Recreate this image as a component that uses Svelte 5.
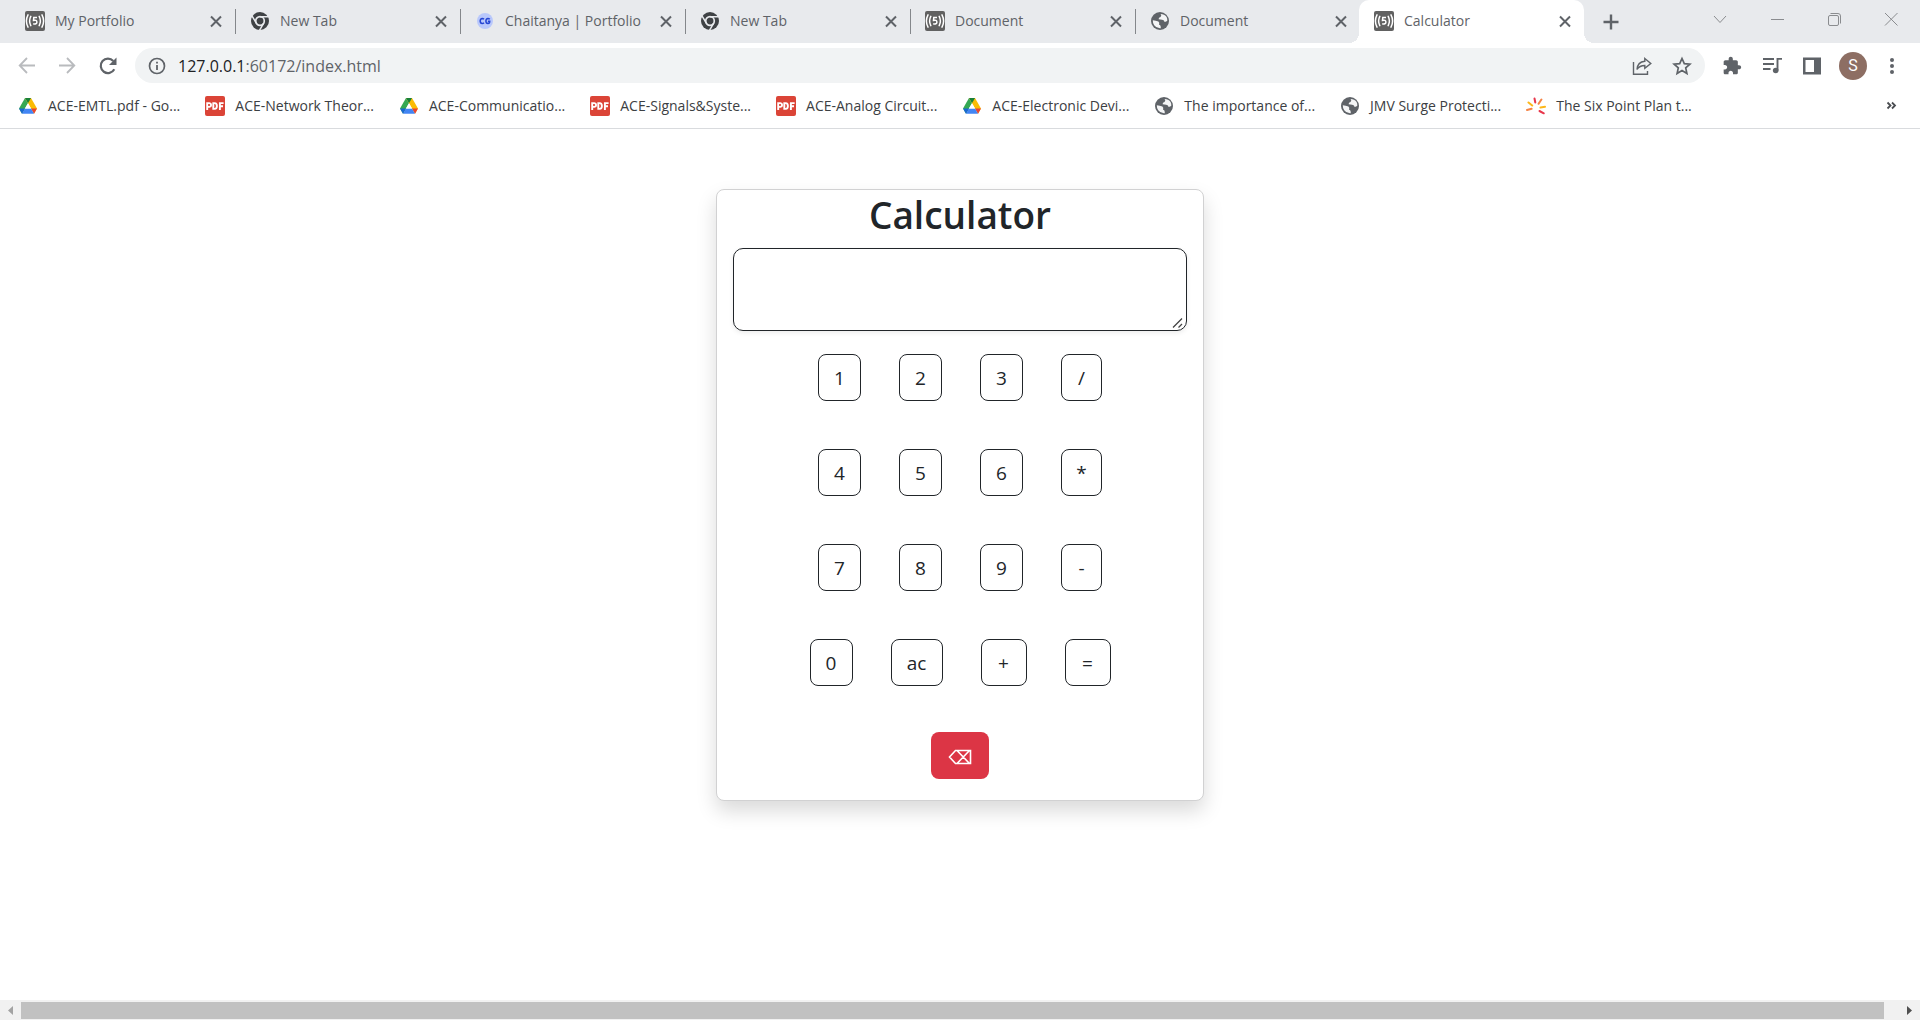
<script>
  const tabs = [
    { title: 'My Portfolio', icon: 'five' },
    { title: 'New Tab', icon: 'chrome' },
    { title: 'Chaitanya | Portfolio', icon: 'cg' },
    { title: 'New Tab', icon: 'chrome' },
    { title: 'Document', icon: 'five' },
    { title: 'Document', icon: 'globe' },
    { title: 'Calculator', icon: 'five', active: true },
  ];

  const bookmarks = [
    { title: 'ACE-EMTL.pdf - Go...', icon: 'drive' },
    { title: 'ACE-Network Theor...', icon: 'pdf' },
    { title: 'ACE-Communicatio...', icon: 'drive' },
    { title: 'ACE-Signals&Syste...', icon: 'pdf' },
    { title: 'ACE-Analog Circuit...', icon: 'pdf' },
    { title: 'ACE-Electronic Devi...', icon: 'drive' },
    { title: 'The importance of...', icon: 'globe' },
    { title: 'JMV Surge Protecti...', icon: 'globe' },
    { title: 'The Six Point Plan t...', icon: 'spark' },
  ];

  const rows = [
    ['1', '2', '3', '/'],
    ['4', '5', '6', '*'],
    ['7', '8', '9', '-'],
    ['0', 'ac', '+', '='],
  ];

  let expression = $state('');

  function sizeOf(key) {
    if (key === 'ac') return 'clear';
    if (key === '+' || key === '=') return 'wide';
    if ('/*-'.includes(key)) return 'slim';
    return 'digit';
  }

  function calculate(text) {
    const tokens = text.match(/\d+|[-+*/]/g) ?? [];
    const values = [Number(tokens[0] ?? 0)];
    for (let i = 1; i + 1 < tokens.length; i += 2) {
      const next = Number(tokens[i + 1]);
      if (tokens[i] === '*') values.push(values.pop() * next);
      else if (tokens[i] === '/') values.push(values.pop() / next);
      else values.push(tokens[i] === '-' ? -next : next);
    }
    return String(values.reduce((a, b) => a + b, 0));
  }

  function press(key) {
    if (key === 'ac') expression = '';
    else if (key === '=') expression = calculate(expression);
    else expression += key;
  }
</script>

{#snippet icon(name)}
  <svg class="icon" viewBox="0 0 20 20" aria-hidden="true">
    {#if name === 'five'}
      <rect width="20" height="20" rx="2" fill="#616161" />
      <g fill="none" stroke="#fff" stroke-width="1.5" stroke-linecap="round">
        <path d="M3 3.8Q-.2 10 3 16.2M17 3.8Q20.2 10 17 16.2M5.8 5.4Q3.4 10 5.8 14.6M14.2 5.4Q16.600 10 14.2 14.6" />
        <path d="M12 6.500H8.800L8.500 9.400Q11.900 8.600 11.900 11.200Q11.700 13.600 8.200 12.800" stroke-linecap="butt" />
      </g>
    {:else if name === 'chrome'}
      <circle cx="10" cy="10" r="9" fill="#3f4245" />
      <circle cx="10" cy="10" r="4.300" fill="none" stroke="#e8eaed" stroke-width="1.700" />
      <path d="M10 5.700H18.500M6.300 12.200L2 4.900M13.700 12.200L9.500 19.300" stroke="#e8eaed" stroke-width="1.500" />
    {:else if name === 'cg'}
      <circle cx="10" cy="10" r="8" fill="#b9c8fb" />
      <g fill="none" stroke="#2545d3" stroke-width="1.500">
        <path d="M9 8.200Q8.300 7.400 7.300 7.400Q5.200 7.600 5.200 10T7.300 12.600Q8.300 12.600 9 11.800" />
        <path d="M14.800 8.200Q14 7.400 13 7.400Q10.900 7.600 10.900 10T13 12.600Q14.800 12.500 14.700 10.300H12.900" />
      </g>
    {:else if name === 'globe'}
      <circle cx="10" cy="10" r="9" fill="#5f6368" />
      <path d="M10.600 3Q12 4.400 10.500 6Q8.500 6.200 8.600 8.200L12.200 8.800Q14.500 9 14.600 11Q16.400 10.800 17.300 9.800Q17.600 5.500 14 3.800Q12.500 3 10.600 3ZM2.800 9.200Q5.800 9.600 8.400 10.600Q10 12.200 8.900 13.600Q10.900 14 10.800 17.200Q6.500 17.600 4.200 14.300Q2.700 12 2.800 9.200Z" fill="#f4f5f6" />
    {:else if name === 'drive'}
      <path d="M7 2L10 7.200L4 17.700L1 12.500Z" fill="#34a853" />
      <path d="M13 2L7 2L16 17.700L19 12.500Z" fill="#fbbc04" />
      <path d="M7 2H13L10 7.200Z" fill="#188038" />
      <path d="M13 12.500H19L16 17.700Z" fill="#ea4335" />
      <path d="M4 17.700L7 12.500H13L16 17.700Z" fill="#4285f4" />
      <path d="M1 12.500H7L4 17.700Z" fill="#1967d2" />
      <path d="M10 7.200L13.100 12.500H6.900Z" fill="#fff" />
    {:else if name === 'pdf'}
      <rect width="20" height="20" rx="2" fill="#db4437" />
      <path d="M2.200 14V7.100H4.300Q6.100 7.300 6.100 8.900T4.300 10.900H2.500M8.300 7.100V12.900H9.700Q11.900 12.700 11.900 10T9.700 7.100ZM14.900 14V7.100H18.600M14.900 10.300H18" fill="none" stroke="#fff" stroke-width="1.900" />
    {:else if name === 'spark'}
      <g fill="none" stroke-width="2" stroke-linecap="round">
        <path d="M8.500 2.500L9.300 6.500M13.500 15L17.800 17.300" stroke="#e8364b" />
        <path d="M15.400 3.500L12.600 7.800M1 14L5.600 12.800" stroke="#f58345" />
        <path d="M2.500 6.500L6.200 9.500M14.500 11.500L19 10.700" stroke="#fdb71a" />
      </g>
    {/if}
  </svg>
{/snippet}

<div class="browser">
  <header>
    <nav class="tabs" aria-label="Open tabs">
      {#each tabs as tab}
        <div class="tab" class:active={tab.active}>
          {@render icon(tab.icon)}
          <span class="tab-title">{tab.title}</span>
          <button class="tool" aria-label="Close {tab.title}">
            <svg viewBox="0 0 20 20"><path d="M5 5.500L15 15.500M15 5.500L5 15.500" stroke="#5f6368" stroke-width="2" /></svg>
          </button>
        </div>
      {/each}
      <button class="tool new-tab" aria-label="New tab">
        <svg viewBox="0 0 20 20"><path d="M10 2.500V17.500M2.500 10H17.500" stroke="#5f6368" stroke-width="2.400" /></svg>
      </button>
      <div class="window-controls">
        <button class="tool" aria-label="Search tabs">
          <svg viewBox="0 0 20 20"><path d="M4 7L10 13.500L16 7" /></svg>
        </button>
        <button class="tool" aria-label="Minimize">
          <svg viewBox="0 0 20 20"><path d="M4 10.500H17" /></svg>
        </button>
        <button class="tool" aria-label="Restore">
          <svg viewBox="0 0 20 20"><rect x="4.500" y="6.500" width="10" height="10" rx="1.500" /><path d="M6.500 4.500H14Q16.500 4.500 16.500 7V14.500" /></svg>
        </button>
        <button class="tool" aria-label="Close window">
          <svg viewBox="0 0 20 20"><path d="M4 4L16.500 16.500M16.500 4L4 16.500" /></svg>
        </button>
      </div>
    </nav>

    <div class="toolbar">
      <button class="tool" aria-label="Back">
        <svg viewBox="0 0 20 20"><path d="M18 9.500H3M10 2L2.700 9.500L10 17" fill="none" stroke="#b9bbbe" stroke-width="1.800" /></svg>
      </button>
      <button class="tool" aria-label="Forward">
        <svg viewBox="0 0 20 20"><path d="M2 9.500H17M10 2L17.300 9.500L10 17" fill="none" stroke="#b9bbbe" stroke-width="1.800" /></svg>
      </button>
      <button class="tool" aria-label="Reload">
        <svg viewBox="0 0 20 20"><path d="M17.300 13.200A7.200 7.200 0 1 1 16.300 5" fill="none" stroke="#5f6368" stroke-width="2.200" /><path d="M19.500 1.500V9H12Z" fill="#5f6368" /></svg>
      </button>
      <div class="address">
        <svg class="icon" viewBox="0 0 20 20" aria-hidden="true"><circle cx="10" cy="10" r="7.500" fill="none" stroke="#5f6368" stroke-width="1.700" /><path d="M10 9V14M10 5.800V7.600" stroke="#5f6368" stroke-width="1.800" /></svg>
        <span class="url"><b>127.0.0.1</b>:60172/index.html</span>
        <button class="tool" aria-label="Share this page">
          <svg viewBox="0 0 20 20"><g fill="none" stroke="#5f6368" stroke-width="1.400"><path d="M1.500 6V18.300H15.500V15" /><path d="M12.800 2.500L18.800 7.500L12.800 12.300V9.500Q7.500 9.500 5 13.500Q5.500 6 12.800 5.300Z" /></g></svg>
        </button>
        <button class="tool" aria-label="Bookmark this tab">
          <svg viewBox="0 0 20 20"><path d="M10 2.500L12.300 7.700L17.900 8.200L13.700 11.900L14.900 17.400L10 14.500L5.100 17.400L6.300 11.900L2.100 8.200L7.700 7.700Z" fill="none" stroke="#5f6368" stroke-width="1.700" /></svg>
        </button>
      </div>
      <div class="extras">
        <button class="tool" aria-label="Extensions">
          <svg viewBox="0 0 24 24"><path d="M20.500 11H19V7c0-1.100-.9-2-2-2h-4V3.500C13 2.120 11.880 1 10.500 1S8 2.120 8 3.500V5H4c-1.100 0-1.990.9-1.990 2v3.800H3.500c1.490 0 2.700 1.210 2.700 2.700s-1.210 2.700-2.700 2.700H2V20c0 1.100.9 2 2 2h3.800v-1.500c0-1.490 1.210-2.700 2.700-2.700 1.490 0 2.700 1.210 2.700 2.700V22H17c1.100 0 2-.9 2-2v-4h1.500c1.380 0 2.500-1.120 2.500-2.500S21.880 11 20.500 11z" fill="#5f6368" /></svg>
        </button>
        <button class="tool" aria-label="Media controls">
          <svg viewBox="0 0 20 20"><path d="M1 3H12M1 8H12M1 13H8.500" stroke="#5f6368" stroke-width="1.800" /><path d="M15.500 14.500V2.900H20" fill="none" stroke="#5f6368" stroke-width="1.900" /><circle cx="13.700" cy="14.500" r="2.800" fill="#5f6368" /></svg>
        </button>
        <button class="tool" aria-label="Side panel">
          <svg viewBox="0 0 20 20"><path d="M1 1.500H19V18.500H1ZM3.500 4V16H12V4Z" fill="#5f6368" fill-rule="evenodd" /></svg>
        </button>
        <button class="avatar" aria-label="Profile">S</button>
        <button class="tool" aria-label="Menu">
          <svg viewBox="0 0 20 20" fill="#5f6368"><circle cx="10" cy="4" r="2" /><circle cx="10" cy="10" r="2" /><circle cx="10" cy="16" r="2" /></svg>
        </button>
      </div>
    </div>

    <nav class="bookmarks" aria-label="Bookmarks">
      {#each bookmarks as bookmark}
        <a href="#{bookmark.icon}">
          {@render icon(bookmark.icon)}
          <span>{bookmark.title}</span>
        </a>
      {/each}
      <button class="tool more" aria-label="More bookmarks">
        <svg viewBox="0 0 20 20"><path d="M5.500 6.500L8.500 9.500L5.500 12.500M10 6.500L13 9.500L10 12.500" fill="none" stroke="#4a4d51" stroke-width="1.800" /></svg>
      </button>
    </nav>
  </header>

  <main>
    <section class="card">
      <h1>Calculator</h1>
      <div class="display">
        <textarea aria-label="Expression" bind:value={expression}></textarea>
        <svg class="grip" viewBox="0 0 12 12" aria-hidden="true"><path d="M1 10.500L10 1.500M6.500 10.500L10 7" stroke="#444" stroke-width="1.300" /></svg>
      </div>
      <div class="keypad">
        {#each rows as row}
          <div class="keys">
            {#each row as key}
              <button class="key {sizeOf(key)}" onclick={() => press(key)}>{key}</button>
            {/each}
          </div>
        {/each}
      </div>
      <button class="erase" aria-label="Delete last" onclick={() => (expression = expression.slice(0, -1))}>
        <svg viewBox="0 0 24 16" aria-hidden="true"><path d="M1.500 8L7.500 1.500H22.500V14.500H7.500ZM9 1.500L21.500 14.500M21.500 1.500L9 14.500" fill="none" stroke="#fff" stroke-width="1.600" /></svg>
      </button>
    </section>
  </main>

  <footer class="scrollbar" aria-hidden="true">
    <svg viewBox="0 0 20 20"><path d="M13 6V15L8 10.500Z" fill="#a3a3a3" /></svg>
    <div class="thumb"></div>
    <svg viewBox="0 0 20 20"><path d="M7 6V15L12 10.500Z" fill="#505050" /></svg>
  </footer>
</div>

<style>
  :global(body) {
    margin: 0;
    background: #fff;
  }

  .browser {
    display: flex;
    flex-direction: column;
    min-height: 100vh;
    font-family: 'Open Sans', 'Noto Sans', sans-serif;
    font-size: 14px;
    color: #212529;
  }

  button {
    margin: 0;
    padding: 0;
    border: 0;
    background: none;
    font: inherit;
    color: inherit;
    cursor: pointer;
  }

  svg {
    display: block;
  }

  .icon,
  .tool,
  .tool svg {
    flex: none;
    width: 20px;
    height: 20px;
  }

  .tabs {
    display: flex;
    align-items: center;
    height: 43px;
    padding-left: 10px;
    background: #e8eaed;
  }

  .tab {
    position: relative;
    display: flex;
    flex: 0 1 225px;
    align-items: center;
    gap: 10px;
    box-sizing: border-box;
    min-width: 0;
    height: 43px;
    padding: 0 9px 1px 15px;
    color: #5f6368;
  }

  .tab::after {
    content: '';
    position: absolute;
    right: -1px;
    top: 9px;
    width: 1px;
    height: 25px;
    background: #84878b;
  }

  .tab:nth-child(6)::after {
    display: none;
  }

  .tab-title {
    flex: 1;
    padding-bottom: 2px;
    overflow: hidden;
    white-space: nowrap;
  }

  .active {
    margin-left: -1px;
    border-radius: 10px 10px 0 0;
    background: #fff;
  }

  .active::before,
  .active::after {
    content: '';
    position: absolute;
    top: auto;
    bottom: 0;
    width: 10px;
    height: 10px;
  }

  .active::before {
    right: 100%;
    background: radial-gradient(circle at 0 0, transparent 10px, #fff 10px);
  }

  .active::after {
    right: auto;
    left: 100%;
    background: radial-gradient(circle at 100% 0, transparent 10px, #fff 10px);
  }

  .new-tab {
    margin-left: 17px;
  }

  .window-controls {
    display: flex;
    gap: 37px;
    margin-left: auto;
    padding: 0 19px 6px 0;
  }

  .window-controls svg {
    fill: none;
    stroke: #8a8c8f;
    stroke-width: 1;
  }

  .toolbar {
    display: flex;
    align-items: center;
    gap: 20px;
    padding: 5px 18px 5px 17px;
  }

  .address {
    display: flex;
    flex: 1;
    align-items: center;
    gap: 20px;
    height: 35px;
    margin: 0 -3px 0 -2px;
    padding: 0 13px 0 12px;
    border-radius: 18px;
    background: #f1f3f4;
  }

  .url {
    flex: 1;
    margin-left: -9px;
    font-size: 16px;
    color: #5f6368;
  }

  .url b {
    font-weight: 400;
    color: #202124;
  }

  .extras {
    display: flex;
    align-items: center;
    gap: 20px;
  }

  .avatar {
    width: 28px;
    height: 28px;
    margin: 0 -5px 0 -3px;
    border-radius: 50%;
    background: #8d6e63;
    font-family: Roboto, sans-serif;
    font-size: 16px;
    color: #fff;
  }

  .bookmarks {
    display: flex;
    align-items: center;
    gap: 25px;
    height: 35px;
    padding: 0 18px 5px;
    border-bottom: 1px solid #d9dbde;
  }

  .bookmarks a {
    display: flex;
    align-items: center;
    gap: 10px;
    color: #3c4043;
    text-decoration: none;
    white-space: nowrap;
  }

  .more {
    margin-left: auto;
  }

  main {
    display: flex;
    flex: 1;
    align-items: flex-start;
    justify-content: center;
    padding: 60px 16px;
  }

  .card {
    display: flex;
    flex-direction: column;
    align-items: center;
    box-sizing: border-box;
    width: 100%;
    max-width: 488px;
    padding: 1px 16px 21px;
    border: 1px solid #d1d1d2;
    border-radius: 8px;
    background: #fff;
    box-shadow: 0 10px 20px rgba(0, 0, 0, 0.15);
  }

  h1 {
    margin: 0 0 9px;
    font-size: 37px;
    font-weight: 600;
    line-height: 48px;
  }

  .display {
    position: relative;
    width: 100%;
    margin-bottom: 23px;
  }

  textarea {
    display: block;
    box-sizing: border-box;
    width: 100%;
    height: 83px;
    padding: 8px 15px;
    border: 1px solid #212529;
    border-radius: 10px;
    box-shadow: 0 2px 5px rgba(0, 0, 0, 0.08);
    font: inherit;
    font-size: 19px;
    resize: none;
  }

  .grip {
    position: absolute;
    right: 3px;
    bottom: 2px;
    width: 12px;
    height: 12px;
  }

  .keypad {
    display: grid;
    gap: 48px;
    margin-bottom: 46px;
  }

  .keys {
    display: flex;
    justify-content: center;
    gap: 38px;
  }

  .key {
    height: 47px;
    padding-top: 1px;
    border: 1px solid #212529;
    border-radius: 8px;
    font-size: 19px;
  }

  .digit {
    width: 43px;
  }

  .slim {
    width: 41px;
  }

  .wide {
    width: 46px;
  }

  .clear {
    width: 52px;
  }

  .erase {
    display: grid;
    place-items: center;
    width: 58px;
    height: 47px;
    padding-top: 3px;
    border-radius: 8px;
    background: #dc3545;
  }

  .erase svg {
    width: 24px;
    height: 16px;
  }

  .scrollbar {
    display: flex;
    height: 20px;
    background: #f1f1f1;
  }

  .scrollbar svg {
    width: 20px;
    height: 20px;
  }

  .thumb {
    flex: 1;
    margin: 2px 16px 1px 1px;
    background: #c1c1c1;
  }
</style>
